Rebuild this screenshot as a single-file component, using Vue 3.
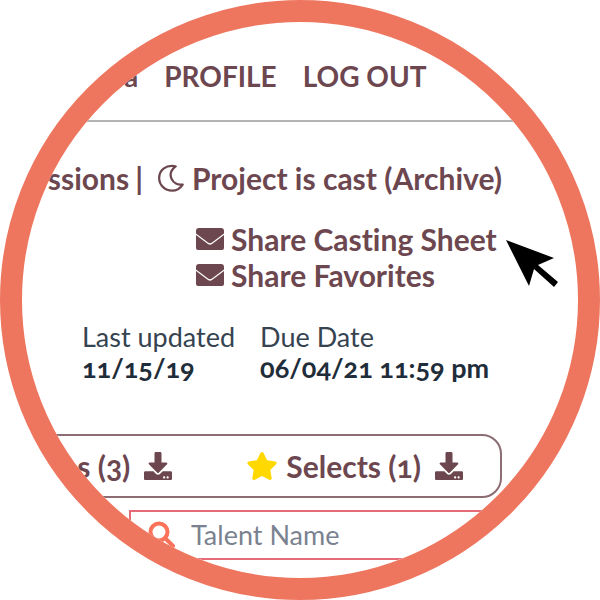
<script setup>
import { ref } from 'vue'

const talent = ref('')
const shares = ['Share Casting Sheet', 'Share Favorites']
const dates = [
  { label: 'Last updated', value: '11/15/19' },
  { label: 'Due Date', value: '06/04/21 11:59 pm' }
]
const downloadPath =
  'M216 0h80c13.3 0 24 10.7 24 24v168h87.7c17.8 0 26.7 21.5 14.1 34.1L269.7 378.3c-7.5 7.5-19.8 7.5-27.3 0L90.1 226.1c-12.6-12.6-3.7-34.1 14.1-34.1H192V24c0-13.3 10.7-24 24-24zm296 376v112c0 13.3-10.7 24-24 24H24c-13.3 0-24-10.7-24-24V376c0-13.3 10.7-24 24-24h146.7l49 49c20.1 20.1 52.5 20.1 72.6 0l49-49H488c13.3 0 24 10.7 24 24zm-124 88c0-11-9-20-20-20s-20 9-20 20 9 20 20 20 20-9 20-20zm64 0c0-11-9-20-20-20s-20 9-20 20 9 20 20 20 20-9 20-20z'
</script>

<template>
  <div class="stage">
    <div class="lens">
      <nav class="nav">
        <a href="#">a</a>
        <a href="#">PROFILE</a>
        <a href="#">LOG OUT</a>
      </nav>

      <main class="content">
        <div class="actions">
          <a href="#">ssions</a>
          <span class="divider">|</span>
          <a href="#" class="archive">
            <svg class="icon" viewBox="0 0 28 30" fill="none" stroke="currentColor" stroke-width="2.4" stroke-linejoin="round">
              <path d="M19 2.500C8 .5 1.300 7 1.300 15S8 28.500 15 28.500C20 28.500 24 26 26.500 22C16 23.500 8 11 19 2.500Z" />
            </svg>
            <span>Project is cast (Archive)</span>
          </a>
        </div>

        <div class="shares">
          <a v-for="share in shares" :key="share" href="#">
            <svg class="icon" viewBox="0 0 28 28" fill="currentColor">
              <path d="M3 3H25Q28 3 28 6V8.500L16 17.500Q14 19 12 17.500L0 8.500V6Q0 3 3 3Z" />
              <path d="M0 10L12 19Q14 20.500 16 19L28 10V23Q28 25 26 25H2Q0 25 0 23Z" />
            </svg>
            <span>{{ share }}</span>
          </a>
        </div>

        <dl class="dates">
          <div v-for="date in dates" :key="date.label">
            <dt>{{ date.label }}</dt>
            <dd>{{ date.value }}</dd>
          </div>
        </dl>

        <div class="tabs">
          <button type="button" class="tab">
            <span>s (3)</span>
            <svg class="icon" viewBox="0 0 512 512" fill="currentColor"><path :d="downloadPath" /></svg>
          </button>
          <button type="button" class="tab">
            <svg class="star" viewBox="0 0 576 512" fill="currentColor">
              <path d="M259.3 17.800L194 150.200 47.900 171.500c-26.200 3.800-36.700 36.100-17.700 54.600l105.700 103-25 145.500c-4.500 26.300 23.200 46 46.400 33.700L288 439.600l130.700 68.700c23.200 12.200 50.900-7.400 46.400-33.700l-25-145.500 105.700-103c19-18.500 8.500-50.800-17.700-54.600L382 150.200 316.700 17.800c-11.700-23.600-45.600-23.900-57.400 0z" />
            </svg>
            <span>Selects (1)</span>
            <svg class="icon" viewBox="0 0 512 512" fill="currentColor"><path :d="downloadPath" /></svg>
          </button>
        </div>
      </main>

      <label class="search">
        <svg class="icon" viewBox="0 0 28 28" fill="none" stroke="currentColor" stroke-width="4">
          <circle cx="12" cy="11" r="8.500" />
          <path d="M18 17L26 25" stroke-linecap="round" />
        </svg>
        <input v-model="talent" type="text" placeholder="Talent Name" aria-label="Talent Name" />
      </label>

      <svg class="pointer" viewBox="0 0 52 47" aria-hidden="true">
        <path d="M0 0L48 18L32 25L52 42L48 47L28 29L23 46Z" />
      </svg>
    </div>
  </div>
</template>

<style>
body {
  margin: 0;
  background: #fff;
}
</style>

<style scoped>
.stage {
  display: flex;
}

.lens {
  position: relative;
  box-sizing: border-box;
  width: 100%;
  max-width: 100vh;
  aspect-ratio: 1;
  border: 22px solid #ee765f;
  border-radius: 50%;
  overflow: hidden;
  background: #fff;
  color: #6d474f;
  font-family: Lato, 'Open Sans', sans-serif;
  font-size: 30px;
  font-weight: 700;
  line-height: 36px;
  font-variant-numeric: oldstyle-nums;
  font-variant-ligatures: no-common-ligatures;
  white-space: nowrap;
}

a {
  color: inherit;
  text-decoration: none;
}

.icon {
  flex: none;
  width: 28px;
  height: 28px;
}

.nav {
  display: flex;
  gap: 26px;
  padding: 36px 0 26px 102px;
  border-bottom: 2px solid #b4b2b3;
  font-size: 28px;
}

.content {
  padding: 38px 76px 0 0;
}

.actions {
  display: flex;
  justify-content: flex-end;
  gap: 6px;
}

.archive,
.shares a {
  display: flex;
  align-items: center;
  gap: 7px;
}

.divider {
  margin-right: 8px;
}

.shares {
  display: flex;
  flex-direction: column;
  padding: 25px 0 0 174px;
}

.dates {
  display: flex;
  gap: 25px;
  margin: 28px 0 0;
  padding-left: 60px;
  color: #1f2d3a;
  font-size: 27px;
  line-height: 31px;
}

.dates dt {
  color: #364350;
  font-weight: 400;
}

.dates dd {
  margin: 0;
}

.tabs {
  display: flex;
  justify-content: flex-end;
  gap: 74px;
  margin-top: 51px;
  padding: 12px 37px 12px 0;
  border: 2px solid #8c6d74;
  border-radius: 20px;
}

.tab {
  display: flex;
  align-items: center;
  gap: 14px;
  padding: 0;
  border: 0;
  background: none;
  color: inherit;
  font: inherit;
  font-variant-numeric: oldstyle-nums;
}

.star {
  width: 32px;
  height: 28px;
  margin-right: -6px;
  color: #ffd800;
}

.search {
  display: flex;
  align-items: center;
  gap: 16px;
  margin: 12px 0 0 107px;
  padding: 5px 16px;
  border: 2px solid #e66b78;
  color: #fb725a;
}

.search input {
  flex: 1;
  min-width: 0;
  height: 36px;
  padding: 0;
  border: 0;
  outline: 0;
  background: none;
  color: #1f2d3a;
  font: inherit;
  font-size: 27px;
  font-weight: 400;
}

.search input::placeholder {
  color: #7a8290;
  opacity: 1;
}

.pointer {
  position: absolute;
  top: 218px;
  left: 484px;
  width: 52px;
  height: 47px;
  fill: #000;
}
</style>
